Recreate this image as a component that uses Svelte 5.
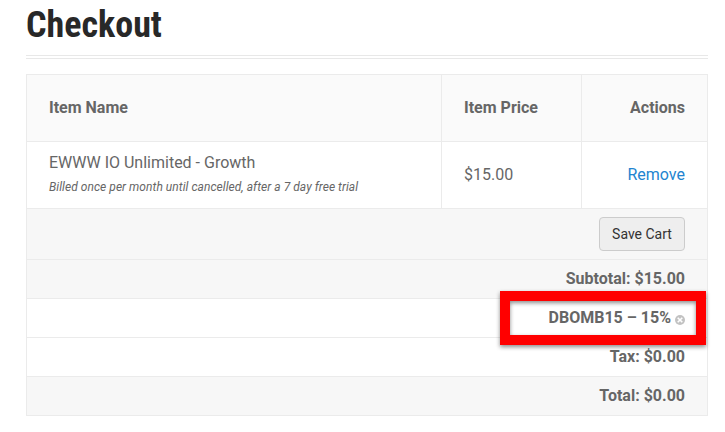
<script lang="ts">
	type Item = { name: string; note: string; price: string };

	let items: Item[] = [
		{
			name: 'EWWW IO Unlimited - Growth',
			note: 'Billed once per month until cancelled, after a 7 day free trial',
			price: '$15.00'
		}
	];
</script>

<main class="checkout">
	<h1 class="title">Checkout</h1>

	<table class="cart">
		<colgroup>
			<col class="col_name" />
			<col class="col_price" />
			<col class="col_actions" />
		</colgroup>
		<thead>
			<tr>
				<th>Item Name</th>
				<th>Item Price</th>
				<th class="right">Actions</th>
			</tr>
		</thead>
		<tbody>
			{#each items as item}
				<tr class="item">
					<td>
						<div class="item_name">{item.name}</div>
						<div class="item_note">{item.note}</div>
					</td>
					<td>{item.price}</td>
					<td class="right"><a href="#remove">Remove</a></td>
				</tr>
			{/each}
		</tbody>
		<tfoot>
			<tr class="save shaded">
				<td colspan="3"><button class="save_btn">Save Cart</button></td>
			</tr>
			<tr class="shaded">
				<th colspan="3">Subtotal: $15.00</th>
			</tr>
			<tr>
				<th colspan="3" class="discount">
					DBOMB15 – 15%
					<svg class="remove_icon" width="10" height="10" viewBox="0 0 10 10">
						<circle cx="5" cy="5" r="5" fill="#c2c2c2" />
						<path d="M2.7 2.7l4.6 4.6M7.3 2.7L2.7 7.3" stroke="#fff" stroke-width="1.6" />
					</svg>
					<div class="highlight"></div>
				</th>
			</tr>
			<tr>
				<th colspan="3">Tax: $0.00</th>
			</tr>
			<tr class="shaded">
				<th colspan="3">Total: $0.00</th>
			</tr>
		</tfoot>
	</table>
</main>

<style>
	:global(body) {
		background: #fff;
	}

	.checkout {
		box-sizing: border-box;
		width: 725px;
		height: 432px;
		padding: 4px 17px 0 26px;
		overflow: hidden;
		font-family: Roboto, 'Liberation Sans', sans-serif;
		font-size: 16px;
		color: #666;
	}

	.title {
		box-sizing: border-box;
		height: 55px;
		margin: 0 0 15px;
		border-bottom: 4px double #e8e8e8;
		font-family: 'Roboto Condensed', Roboto, sans-serif;
		font-stretch: 75%;
		font-size: 36px;
		font-weight: 700;
		line-height: 43px;
		color: #282828;
	}

	.cart {
		width: 682px;
		table-layout: fixed;
		border-collapse: separate;
		border-spacing: 0;
		border: 1px solid #ebebeb;
		border-width: 1px 0 0 1px;
	}

	.col_name {
		width: 415px;
	}

	.col_price {
		width: 140px;
	}

	.col_actions {
		width: 126px;
	}

	th,
	td {
		box-sizing: border-box;
		padding: 0 22px;
		border: 1px solid #ebebeb;
		border-width: 0 1px 1px 0;
		text-align: left;
		vertical-align: middle;
		line-height: 20px;
	}

	th {
		font-weight: 700;
	}

	thead th {
		height: 67px;
		background: #fafafa;
	}

	.item td {
		height: 67px;
	}

	.item_name {
		line-height: 24px;
	}

	.item_note {
		font-size: 12px;
		font-style: italic;
		letter-spacing: 0.05px;
		line-height: 24px;
	}

	.right,
	tfoot th,
	tfoot td {
		text-align: right;
	}

	a {
		color: #2284d0;
		text-decoration: none;
	}

	tfoot th {
		height: 39px;
	}

	.save td {
		height: 51px;
	}

	.shaded th,
	.shaded td {
		background: #f7f7f7;
	}

	.save_btn {
		display: block;
		box-sizing: border-box;
		width: 86px;
		height: 34px;
		margin-left: auto;
		padding: 0;
		border: 1px solid #ccc;
		border-radius: 4px;
		background: #eee;
		font-family: inherit;
		font-size: 14px;
		color: #333;
	}

	.discount {
		position: relative;
	}

	.remove_icon {
		vertical-align: -2px;
	}

	.highlight {
		position: absolute;
		top: -8px;
		right: 1px;
		box-sizing: border-box;
		width: 206px;
		height: 54px;
		border: 10px solid #f00;
		filter: drop-shadow(0 2px 2px rgba(0, 0, 0, 0.45));
		pointer-events: none;
	}
</style>
